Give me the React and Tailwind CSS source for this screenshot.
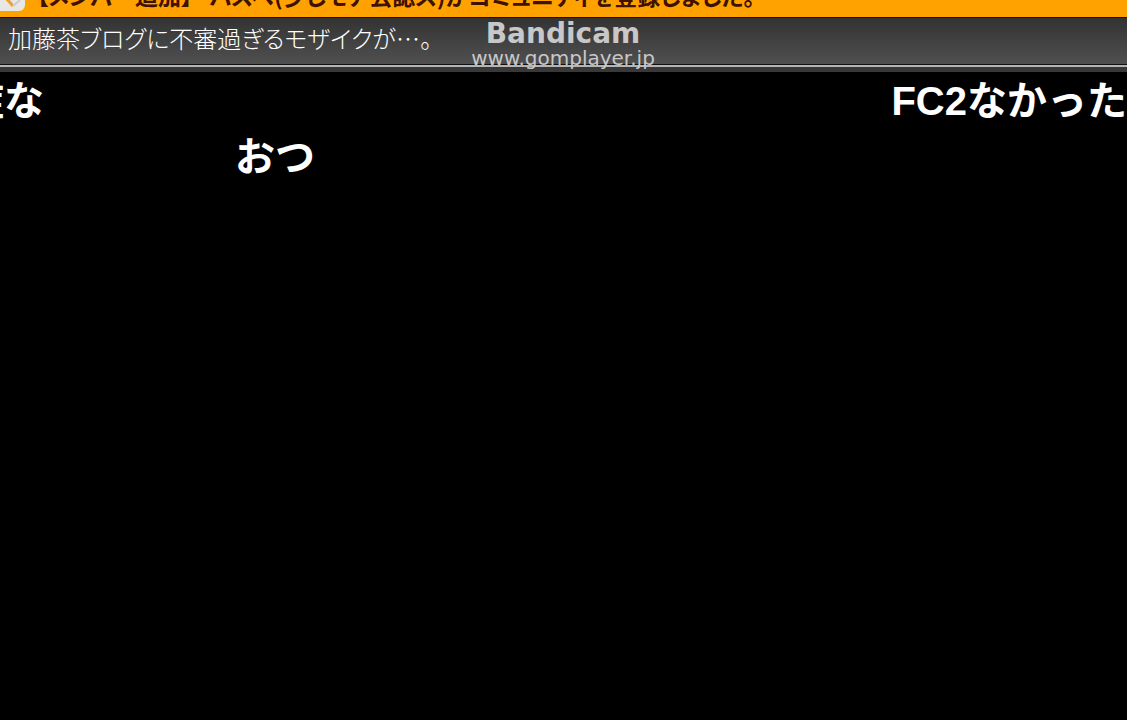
import React from 'react'

const comments = [
    { id: 1, text: '症な', className: 'left-0 top-1 -translate-x-9' },
    { id: 2, text: 'FC2なかった', className: 'right-0 top-1' },
    { id: 3, text: 'おつ', className: 'left-[235px] top-15' }
]

const NoticeBar = () => (
    <div className="h-[17px] overflow-hidden bg-[#ffa200] flex items-end">
        <div className="w-[25px] h-6 mb-1.5 shrink-0 rounded-br-md bg-[#e9e7e4] flex items-end pb-1 pl-1.5">
            <svg className="w-4 h-4" viewBox="0 0 16 16" fill="none">
                <path d="M1 8 L7 15" stroke="#e9a23a" strokeWidth="3" />
                <path d="M7 15 L14 9" stroke="#c9cdd2" strokeWidth="2" />
            </svg>
        </div>
        <p className="ml-3 mb-2.5 text-[23px] leading-6 font-bold text-[#401000] whitespace-nowrap [font-feature-settings:'palt']">
            【メンバー追加】 ・ハスペ(少しモア公認ス)がコミュニティを登録しました。
        </p>
    </div>
)

const TitleBar = () => (
    <header className="relative h-[55px] border-t border-[#1c1008] bg-linear-to-b from-[#333] to-[#555]">
        <div className="absolute inset-x-0 bottom-0 h-2 bg-[#383838] border-t border-[#111]">
            <div className="h-0.5 bg-[#b5b5b5]" />
        </div>
        <h1 className="relative pl-2 pt-1 text-2xl leading-8 font-light text-white whitespace-nowrap [font-feature-settings:'palt']">
            加藤茶ブログに不審過ぎるモザイクが…。
        </h1>
        <div className="absolute left-[467px] top-0 w-48 text-center text-[#c8c8c8] font-['DejaVu_Sans',sans-serif]">
            <p className="text-[28px] leading-8 font-bold">Bandicam</p>
            <p className="text-[20px] leading-4">www.gomplayer.jp</p>
        </div>
    </header>
)

const App = () => {
    return (
        <div className="min-h-screen flex flex-col overflow-hidden bg-black font-['Noto_Sans_CJK_JP',sans-serif]">
            <NoticeBar />
            <TitleBar />
            <main className="relative grow overflow-hidden">
                {comments.map(comment => (
                    <p
                        key={comment.id}
                        className={`absolute text-[40px] leading-[50px] font-bold text-white whitespace-nowrap font-['Liberation_Sans','Noto_Sans_CJK_JP',sans-serif] ${comment.className}`}
                    >
                        {comment.text}
                    </p>
                ))}
            </main>
        </div>
    )
}

export default App
